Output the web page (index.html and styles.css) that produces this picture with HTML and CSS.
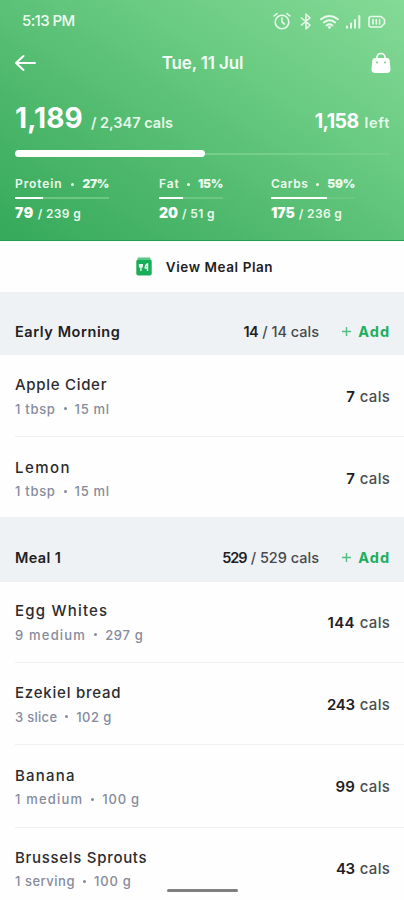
FILE: index.html
```
<!DOCTYPE html>
<html lang="en">
<head>
<meta charset="utf-8">
<title>Meals</title>
<link rel="stylesheet" href="styles.css">
</head>
<body>
<div class="screen">
  <header class="hero">
    <div class="status">
      <span class="time">5:13 PM</span>
      <svg class="status-icons" width="114" height="20" viewBox="0 0 114 20" fill="none" stroke="#e9f9ec" stroke-width="1.6" stroke-linecap="round" stroke-linejoin="round">
        <circle cx="10" cy="11" r="6.8"/><path d="M10 7v4.2l2.400 1.800M2 5l3-2.400M18 5l-3-2.400"/>
        <path d="M29.500 7l8.500 7-4 4V3l4 4-8.500 7"/>
        <path d="M49 8.200q8.500-6.400 17 0M51.800 11.400q5.700-4.200 11.400 0M54.500 14.400q3-2.200 6 0" stroke-width="1.900"/><circle cx="57.500" cy="16.200" r=".7"/>
        <path d="M75 15.500v1.300M79 12.500v4.300M83 9v7.800M87.300 5v11.800" stroke-width="2"/>
        <path d="M99 5.500h10l3.500 3v4l-3.500 3.500H99q-2 0-2-2v-6.500q0-2 2-2zM101 8.500v4.500M104.300 8.500v4.500M107.600 8.500v4.500"/>
      </svg>
    </div>
    <nav class="bar">
      <svg width="22" height="18" viewBox="0 0 22 18" fill="none" stroke="#fff" stroke-width="1.900" stroke-linecap="round" stroke-linejoin="round"><path d="M20 9H1M8.500 2L1 9l7.500 7"/></svg>
      <h1>Tue, 11 Jul</h1>
      <svg width="20" height="22" viewBox="0 0 20 22"><path d="M6 8V5.500a4 4 0 0 1 8 0V8" fill="none" stroke="#fff" stroke-width="1.600"/><path d="M4 6h12q2.300 0 2.600 2.300l.9 8.700q.3 4-3.500 4H4q-3.800 0-3.500-4l.9-8.700Q1.700 6 4 6z" fill="#fff"/><circle cx="6" cy="10.500" r=".9" fill="#68c981"/><circle cx="14" cy="10.500" r=".9" fill="#68c981"/></svg>
    </nav>
    <div class="totals">
      <div><b class="big">1,189</b><span class="goal">/ 2,347 cals</span></div>
      <div><b class="remain">1,158</b><span class="left">left</span></div>
    </div>
    <div class="progress"><i style="width:50.7%"></i></div>
    <div class="macros">
      <section class="protein">
        <div class="label"><span class="w9">Protein</span><em></em><b>27%</b></div>
        <div class="track"><i style="width:30%"></i></div>
        <div class="amount"><b class="w6">79</b><span>/ 239 g</span></div>
      </section>
      <section class="fat">
        <div class="label"><span class="w9">Fat</span><em></em><b>15%</b></div>
        <div class="track"><i style="width:38%"></i></div>
        <div class="amount"><b>20</b><span>/ 51 g</span></div>
      </section>
      <section class="carbs">
        <div class="label"><span class="w5">Carbs</span><em></em><b>59%</b></div>
        <div class="track"><i style="width:67%"></i></div>
        <div class="amount"><b>175</b><span>/ 236 g</span></div>
      </section>
    </div>
  </header>

  <div class="plan">
    <svg width="16" height="19" viewBox="0 0 16 19"><path d="M2 .5h12l1 2H1z" fill="#55c781"/><rect x=".3" y="2.500" width="15.400" height="16" rx="2" fill="#18ad59"/><path d="M3.500 7v2.200q0 1.200 1.400 1.200t1.400-1.200V7M4.900 7v7M11.500 14V7q-2.400 1-2.200 4h2.200" fill="none" stroke="#e4f8eb" stroke-width="1.400"/></svg>
    <span>View Meal Plan</span>
  </div>

  <div class="meal first">
    <h2>Early Morning</h2>
    <div class="sum"><b class="n6">14</b><span>/ 14 cals</span></div>
    <div class="add"><svg width="9" height="9" viewBox="0 0 9 9"><path d="M4.500 0v9M0 4.500h9" stroke="#55bd84" stroke-width="1.400"/></svg><b>Add</b></div>
  </div>
  <div class="item"><div><h3 class="w7">Apple Cider</h3><p><span class="w7">1 tbsp</span><em></em><span class="w7">15 ml</span></p></div><div class="cals"><b>7</b><span>cals</span></div></div>
  <div class="item"><div><h3 class="w14">Lemon</h3><p><span class="w7">1 tbsp</span><em></em><span class="w7">15 ml</span></p></div><div class="cals"><b>7</b><span>cals</span></div></div>

  <div class="meal second">
    <h2 class="w4">Meal 1</h2>
    <div class="sum"><b class="n10">529</b><span>/ 529 cals</span></div>
    <div class="add"><svg width="9" height="9" viewBox="0 0 9 9"><path d="M4.500 0v9M0 4.500h9" stroke="#55bd84" stroke-width="1.400"/></svg><b>Add</b></div>
  </div>
  <div class="item"><div><h3 class="w12">Egg Whites</h3><p><span class="w12">9 medium</span><em></em><span class="w7">297 g</span></p></div><div class="cals"><b class="w3">144</b><span>cals</span></div></div>
  <div class="item"><div><h3 class="w8">Ezekiel bread</h3><p><span class="w3">3 slice</span><em></em><span class="w4">102 g</span></p></div><div class="cals"><b class="n3">243</b><span>cals</span></div></div>
  <div class="item"><div><h3 class="w12">Banana</h3><p><span class="w12">1 medium</span><em></em><span class="w8">100 g</span></p></div><div class="cals"><b>99</b><span>cals</span></div></div>
  <div class="item"><div><h3 class="w7">Brussels Sprouts</h3><p><span class="w5">1 serving</span><em></em><span class="w8">100 g</span></p></div><div class="cals"><b class="n3">43</b><span>cals</span></div></div>
  <div class="home"></div>
</div>
</body>
</html>
```
FILE: styles.css
```
* { box-sizing: border-box; margin: 0; padding: 0; }
body { background: #fefefe; font-family: Inter, "Liberation Sans", sans-serif; color: #1f2023; }
.screen { position: relative; width: 404px; height: 900px; overflow: hidden; background: #fefefe; }
svg { display: block; flex: none; }
span, b, h1, h2, h3 { white-space: nowrap; }

.hero {
  height: 241px;
  padding: 0 14px 0 15px;
  color: #fff;
  background: linear-gradient(212deg, #84da96 0%, #67c980 38%, #4fb96d 66%, #36a95a 100%);
  border-bottom: 1px solid #22a052;
}
.status { height: 41px; display: flex; justify-content: space-between; align-items: center; padding: 0 4px 0 7px; }
.time { font-size: 15px; font-weight: 500; letter-spacing: -.6px; color: #eefbf0; }
.bar { height: 44px; display: flex; justify-content: space-between; align-items: center; margin-right: -1px; }
.bar h1 { font-size: 17px; font-weight: 600; letter-spacing: -.15px; color: #f4fdf5; margin-right: 3px; }
.totals { height: 65px; padding-top: 15px; display: flex; justify-content: space-between; align-items: baseline; line-height: 36px; }
.big { font-size: 28px; letter-spacing: .1px; }
.goal { font-size: 14.5px; font-weight: 600; margin-left: 8px; letter-spacing: 0; color: #e6f8e9; }
.remain { font-size: 19.5px; letter-spacing: -.6px; }
.left { font-size: 14.5px; font-weight: 600; margin-left: 6px; letter-spacing: .73px; color: #e6f8e9; }
.progress { height: 7px; display: flex; align-items: center; background: linear-gradient(#76ce8b, #76ce8b) center / 100% 2px no-repeat; }
.progress i { height: 7px; border-radius: 4px; background: #fff; }

.macros { display: grid; grid-template-columns: 144px 112px 1fr; padding-top: 18px; }
.protein { width: 94px; }
.fat { width: 64px; }
.carbs { width: 84px; }
.label, .amount { display: flex; line-height: 18px; font-size: 12px; }
.label { justify-content: space-between; align-items: center; height: 18px; font-weight: 600; color: #eaf9ec; }
.label b { letter-spacing: -.3px; }
em { width: 3px; height: 3px; border-radius: 50%; background: currentColor; }
.track { height: 2px; margin-top: 4px; background: #6bc782; }
.track i { display: block; height: 2px; background: #fff; }
.amount { align-items: baseline; gap: 4px; margin-top: 5px; font-weight: 600; }
.amount b { font-size: 14px; }
.amount span { letter-spacing: .34px; color: #eaf9ec; }

.plan { height: 51px; display: flex; align-items: center; justify-content: center; gap: 14px; padding-left: 5px; font-size: 13.5px; font-weight: 600; letter-spacing: .57px; }
.meal { background: #eef2f5; display: flex; align-items: center; padding: 15px 15px 0 15px; }
.meal.first { height: 63px; padding-top: 15px; }
.meal.second { height: 65px; padding-top: 17px; }
.meal h2 { flex: 1; font-size: 14.5px; font-weight: 600; letter-spacing: .58px; }
.sum { display: flex; gap: 4px; font-size: 14.5px; }
.sum b { font-weight: 600; }
.sum span { font-weight: 500; color: #46494d; }
.add { width: 70px; display: flex; align-items: center; justify-content: flex-end; gap: 7px; color: #1cae60; font-size: 14.5px; }
.add b { letter-spacing: .97px; margin-right: -1px; }

.item { height: 82.3px; margin-left: 15px; padding: 19.3px 14px 0 0; display: flex; justify-content: space-between; border-bottom: 1px solid #eeefef; }
.item:has(+ .meal) { height: 79.7px; border: 0; }
.meal.second + .item { height: 81px; padding-top: 18.5px; }
.item h3 { font-size: 15px; font-weight: 500; line-height: 22px; color: #2b2c2f; }
.item p { display: flex; align-items: center; gap: 8px; margin-top: 2.5px; font-size: 13px; line-height: 20px; font-weight: 500; color: #858b9b; }
.cals { display: flex; gap: 5px; font-size: 15px; line-height: 22px; padding-top: 11.3px; }
.cals b { font-weight: 600; }
.cals span { font-weight: 500; letter-spacing: .25px; color: #4b4d51; }
.home { position: absolute; left: 167px; top: 889px; width: 71px; height: 3px; border-radius: 2px; background: #7d807f; }

.w3 { letter-spacing: .29px; }
.w4, .meal .w4 { letter-spacing: .38px; }
.w5 { letter-spacing: .52px; }
.w6 { letter-spacing: .58px; }
.w7 { letter-spacing: .7px; }
.w8 { letter-spacing: .78px; }
.w9 { letter-spacing: .9px; }
.w12 { letter-spacing: 1.2px; }
.w14 { letter-spacing: 1.44px; }
.n3 { letter-spacing: -.3px; }
.n6 { letter-spacing: -.6px; }
.n10 { letter-spacing: -1px; }
```
